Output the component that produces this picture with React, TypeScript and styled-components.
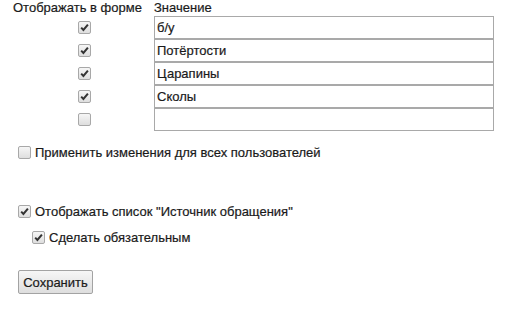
import React from "react";
import styled, { createGlobalStyle } from "styled-components";

const Global = createGlobalStyle`
  html, body { margin: 0; padding: 0; background: #fff; }
  body {
    font-family: "Liberation Sans", Arial, sans-serif;
    font-size: 13px;
    color: #1a1a1a;
    -webkit-text-stroke: 0.2px #1a1a1a;
  }
`;

const Page = styled.div`
  display: flex;
  flex-direction: column;
  align-items: flex-start;
`;

const Table = styled.div`
  display: grid;
  grid-template-columns: 141px 340px;
  margin-left: 13px;
`;

const HeadCell = styled.div`
  height: 16px;
  line-height: 15px;
  white-space: nowrap;
`;

const CheckCell = styled.div`
  height: 23px;
  display: flex;
  align-items: center;
  justify-content: center;
  padding-left: 1px;
`;

const ValueInput = styled.input`
  box-sizing: border-box;
  width: 340px;
  height: 23px;
  margin: 0;
  padding: 0 2px;
  border: 1px solid #a9a9a9;
  border-radius: 0;
  font-family: "Liberation Sans", Arial, sans-serif;
  font-size: 13px;
  color: #1a1a1a;
  -webkit-text-stroke: 0.2px #1a1a1a;
  outline: none;
  background: #fff;
`;

const Box = styled.span<{ $checked: boolean }>`
  box-sizing: border-box;
  width: 13px;
  height: 13px;
  display: inline-flex;
  align-items: center;
  justify-content: center;
  border: 1px solid #a8a8a8;
  border-radius: 2px;
  background: linear-gradient(#f6f6f6, #dedede);
  flex: none;
`;

const OptionRow = styled.label<{ $top: number; $indent?: number }>`
  display: flex;
  align-items: center;
  gap: 4px;
  height: 17px;
  margin-top: ${(p) => p.$top}px;
  margin-left: ${(p) => 18 + (p.$indent ?? 0)}px;
  white-space: nowrap;
  cursor: default;
`;

const SaveButton = styled.button`
  margin: 24px 0 0 18px;
  box-sizing: border-box;
  width: 75px;
  height: 24px;
  padding: 0;
  border: 1px solid #a3a3a3;
  border-radius: 2px;
  background: linear-gradient(#f6f6f6, #dedede);
  font-family: "Liberation Sans", Arial, sans-serif;
  font-size: 13px;
  color: #1a1a1a;
  -webkit-text-stroke: 0.2px #1a1a1a;
`;

const Check = ({ checked }: { checked: boolean }) => (
  <Box $checked={checked}>
    {checked && (
      <svg width="11" height="11" viewBox="0 0 11 11">
        <path d="M2.2 5.6 L4.4 7.9 L8.9 2.6" fill="none" stroke="#333" strokeWidth="2" />
      </svg>
    )}
  </Box>
);

const rows = [
  { checked: true, value: "б/у" },
  { checked: true, value: "Потёртости" },
  { checked: true, value: "Царапины" },
  { checked: true, value: "Сколы" },
  { checked: false, value: "" },
];

export default function App() {
  return (
    <Page>
      <Global />
      <Table>
        <HeadCell>Отображать в форме</HeadCell>
        <HeadCell>Значение</HeadCell>
        {rows.map((r, i) => (
          <React.Fragment key={i}>
            <CheckCell>
              <Check checked={r.checked} />
            </CheckCell>
            <ValueInput defaultValue={r.value} />
          </React.Fragment>
        ))}
      </Table>
      <OptionRow $top={13}>
        <Check checked={false} />
        Применить изменения для всех пользователей
      </OptionRow>
      <OptionRow $top={42}>
        <Check checked />
        Отображать список "Источник обращения"
      </OptionRow>
      <OptionRow $top={9} $indent={14}>
        <Check checked />
        Сделать обязательным
      </OptionRow>
      <SaveButton>Сохранить</SaveButton>
    </Page>
  );
}
